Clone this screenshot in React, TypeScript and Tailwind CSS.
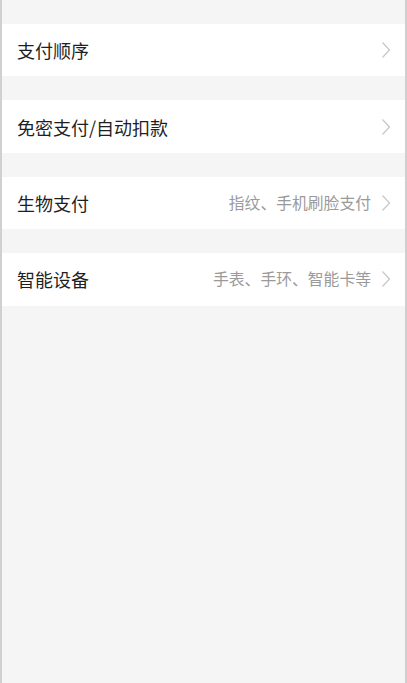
import React from "react";

const rows: { title: string; sub?: string }[] = [
  { title: "支付顺序" },
  { title: "免密支付/自动扣款" },
  { title: "生物支付", sub: "指纹、手机刷脸支付" },
  { title: "智能设备", sub: "手表、手环、智能卡等" },
];

function Chevron() {
  return (
    <svg width="10" height="18" viewBox="0 0 10 18" fill="none" className="shrink-0">
      <path d="M1.5 1.5 L8.5 9 L1.5 16.5" stroke="#c8c8c8" strokeWidth="1.3" />
    </svg>
  );
}

export default function App() {
  return (
    <div
      className="relative h-[683px] w-[407px] overflow-hidden border-l-2 border-r-2 border-l-[#d0d0d0] border-r-[#cfcfcf] bg-[#f5f5f5]"
      style={{ fontFamily: '"Noto Sans CJK SC", "Noto Sans", sans-serif' }}
    >
      <div className="absolute left-[-2px] top-0 h-[24px] w-[2px] bg-[#3b8eea]" />
      <div className="flex flex-col gap-[24px] pt-[24px]">
        {rows.map((r) => (
          <div key={r.title} className="flex h-[52.4px] items-center bg-white pl-[15px] pr-[14px]">
            <span className="flex-1 text-[18px] leading-none text-[#1f1f1f]">{r.title}</span>
            {r.sub && (
              <span className="mr-[10px] text-[15.8px] leading-none text-[#9a9a9a]">{r.sub}</span>
            )}
            <Chevron />
          </div>
        ))}
      </div>
    </div>
  );
}
